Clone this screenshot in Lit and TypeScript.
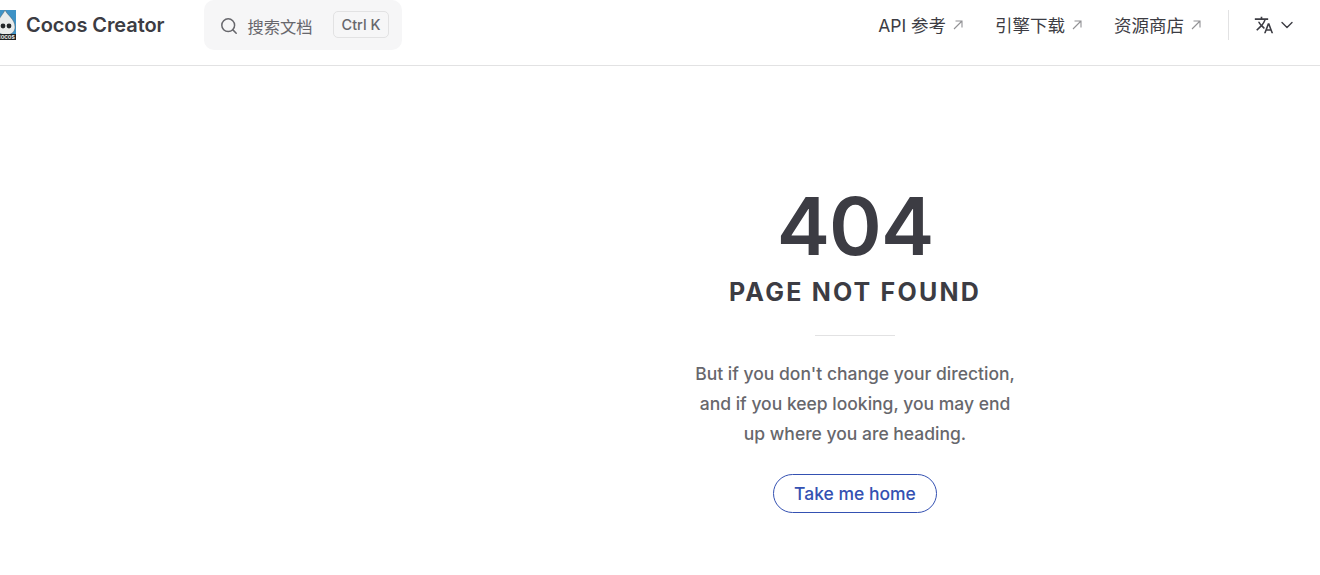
import { LitElement, html, css, svg } from "lit";
import { customElement } from "lit/decorators.js";

const arrow = svg`<path d="M3 11 L11 3 M4.5 3 H11 V9.5" fill="none" stroke="currentColor" stroke-width="1.1"/>`;

const navLinks = ["API 参考", "引擎下载", "资源商店"];

@customElement("app-root")
export class AppRoot extends LitElement {
  static styles = css`
    :host {
      display: block;
      height: 575px;
      overflow: hidden;
      background: #fff;
      color: #3c3c43;
      font-family: Inter, "Noto Sans CJK SC", sans-serif;
    }

    .nav {
      display: flex;
      align-items: flex-start;
      height: 65px;
      border-bottom: 1px solid #e2e2e3;
    }

    .brand {
      display: flex;
      align-items: center;
      gap: 10px;
      height: 50px;
      margin-left: -4px;
      font-size: 20px;
      font-weight: 600;
      letter-spacing: -0.08px;
    }

    .logo {
      width: 20px;
      height: 30px;
    }

    .search {
      display: flex;
      align-items: center;
      box-sizing: border-box;
      width: 198px;
      height: 50px;
      margin-left: 40px;
      padding: 2px 13px 0 16px;
      border-radius: 10px;
      background: #f6f6f7;
      color: #67676c;
      font-size: 16.25px;
    }

    .search svg {
      width: 18px;
      height: 18px;
      margin-right: 9px;
    }

    .keys {
      margin-left: auto;
      margin-top: -3px;
      padding: 0 8px;
      border: 1px solid #e2e2e3;
      border-radius: 5px;
      font-size: 14.5px;
      font-weight: 500;
      line-height: 25px;
    }

    .links {
      display: flex;
      align-items: center;
      height: 50px;
      margin-left: auto;
      font-size: 17.5px;
      font-weight: 400;
    }

    .link {
      display: flex;
      align-items: center;
      margin-right: 30px;
    }

    .link:last-child {
      margin-right: 0;
    }

    .link span {
      margin-top: -2px;
    }

    .link svg {
      width: 14px;
      height: 14px;
      margin-left: 5px;
      color: #929295;
    }

    .divider {
      width: 1px;
      height: 30px;
      margin: 10px 25px 0 25px;
      background: #e2e2e3;
    }

    .lang {
      display: flex;
      align-items: center;
      height: 50px;
      margin-right: 25px;
    }

    .lang .globe {
      width: 20px;
      height: 20px;
      fill: #3c3c43;
    }

    .lang .chev {
      width: 16px;
      height: 16px;
      margin-left: 5px;
    }

    .main {
      display: flex;
      flex-direction: column;
      align-items: center;
      padding: 120px 0 0 390px;
      text-align: center;
    }

    .code {
      font-size: 80px;
      font-weight: 600;
      line-height: 80px;
      letter-spacing: -1px;
    }

    .title {
      padding-top: 14px;
      font-size: 25px;
      font-weight: 700;
      line-height: 25px;
      letter-spacing: 2.2px;
    }

    .rule {
      width: 80px;
      height: 1px;
      margin: 30px 0 23px;
      background: #e2e2e3;
    }

    .quote {
      width: 330px;
      color: #67676c;
      font-size: 17.5px;
      font-weight: 500;
      line-height: 30px;
    }

    .home {
      box-sizing: border-box;
      height: 39px;
      margin-top: 25px;
      padding: 0 20.5px;
      border: 1px solid #3451b2;
      border-radius: 20px;
      color: #3451b2;
      font-size: 17.5px;
      font-weight: 500;
      line-height: 37px;
      text-decoration: none;
    }
  `;

  render() {
    return html`
      <header class="nav">
        <div class="brand">
          <svg class="logo" viewBox="0 0 20 30">
            <rect x="0" y="0" width="20" height="30" fill="#3f93c6" />
            <path d="M9 0 C11 5 19 9 19 17 C19 22 15 25 10 25 C5 25 1 22 1 17 C1 9 7 5 9 0 Z" fill="#e9ecec" stroke="#4a4f54" stroke-width="0.4" />
            <circle cx="7" cy="16" r="2.4" fill="#23282b" />
            <circle cx="13" cy="16" r="2.4" fill="#23282b" />
            <rect x="0" y="24" width="20" height="6" fill="#1e2326" />
            <text x="10" y="29" fill="#e9ecec" font-size="6" font-weight="700" text-anchor="middle" font-family="Inter, sans-serif">cocos</text>
          </svg>
          <span>Cocos Creator</span>
        </div>
        <div class="search">
          <svg viewBox="0 0 18 18" fill="none" stroke="currentColor" stroke-width="1.5" stroke-linecap="round">
            <circle cx="8.2" cy="8.2" r="6.4" />
            <path d="M12.9 12.9 L16.2 16.2" />
          </svg>
          <span>搜索文档</span>
          <span class="keys">Ctrl K</span>
        </div>
        <nav class="links">
          ${navLinks.map(
            (label) => html`
              <div class="link">
                <span>${label}</span>
                <svg viewBox="0 0 14 14">${arrow}</svg>
              </div>
            `,
          )}
        </nav>
        <div class="divider"></div>
        <div class="lang">
          <svg class="globe" viewBox="0 0 24 24">
            <path d="M12.87 15.07l-2.54-2.51.03-.03c1.74-1.94 2.98-4.17 3.71-6.53H17V4h-7V2H8v2H1v1.99h11.17C11.5 7.92 10.44 9.75 9 11.35 8.07 10.32 7.3 9.19 6.69 8h-2c.73 1.63 1.73 3.17 2.98 4.56l-5.09 5.02L4 19l5-5 3.11 3.11.76-2.04zM18.5 10h-2L12 22h2l1.12-3h4.75L21 22h2l-4.5-12zm-2.62 7l1.62-4.33L19.12 17h-3.24z" />
          </svg>
          <svg class="chev" viewBox="0 0 16 16" fill="none" stroke="#3c3c43" stroke-width="1.4" stroke-linecap="round" stroke-linejoin="round">
            <path d="M3 5.5 L8 10.5 L13 5.5" />
          </svg>
        </div>
      </header>
      <main class="main">
        <div class="code">404</div>
        <div class="title">PAGE NOT FOUND</div>
        <div class="rule"></div>
        <div class="quote">
          But if you don't change your direction,<br />
          and if you keep looking, you may end<br />
          up where you are heading.
        </div>
        <a class="home" href="#">Take me home</a>
      </main>
    `;
  }
}
